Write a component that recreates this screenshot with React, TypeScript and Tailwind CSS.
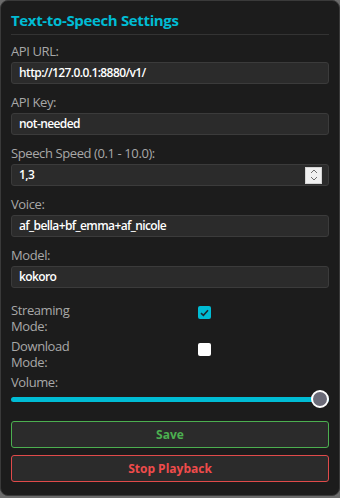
import React from 'react';

const Label = ({ children }: { children: React.ReactNode }) => (
  <div className="text-[13px] leading-[16px] tracking-[-0.4px] text-[#a8a8a8] mb-[3px]">{children}</div>
);

const Field = ({ value }: { value: string }) => (
  <div className="h-[22px] w-full rounded-[3px] border border-[#3b3b3b] bg-[#2b2b2b] px-[7px] flex items-center text-[12px] font-semibold tracking-[-0.6px] text-white">
    {value}
  </div>
);

export default function App() {
  return (
    <div className="h-[498px] w-[340px] bg-[#6b6b6b] font-['Open_Sans',sans-serif]">
      <div className="h-[496px] w-[340px] rounded-[8px] border border-[#3a3a3a] bg-[#1c1c1c] px-[10px] pt-[9px]">
        <h1 className="text-[15px] leading-[20px] font-bold text-[#00bcd4] tracking-[-0.35px]">Text-to-Speech Settings</h1>
        <div className="mt-[4px] h-px bg-[#333333]" />

        <div className="mt-[8px]">
          <Label>API URL:</Label>
          <Field value="http://127.0.0.1:8880/v1/" />
        </div>

        <div className="mt-[10px]">
          <Label>API Key:</Label>
          <Field value="not-needed" />
        </div>

        <div className="mt-[10px]">
          <Label>Speech Speed (0.1 - 10.0):</Label>
          <div className="h-[22px] w-full rounded-[3px] border border-[#3b3b3b] bg-[#2b2b2b] pl-[7px] pr-[6px] flex items-center justify-between text-[12px] font-semibold tracking-[-0.6px] text-white">
            <span>1,3</span>
            <div className="h-[17px] w-[17px] bg-[#f0f0f0] border border-[#d4d4d4] flex flex-col items-center justify-center gap-[2px]">
              <svg width="8" height="5" viewBox="0 0 8 5"><path d="M1 4 L4 1 L7 4" fill="none" stroke="#6e6e6e" strokeWidth="1" /></svg>
              <svg width="8" height="5" viewBox="0 0 8 5"><path d="M1 1 L4 4 L7 1" fill="none" stroke="#6e6e6e" strokeWidth="1" /></svg>
            </div>
          </div>
        </div>

        <div className="mt-[10px]">
          <Label>Voice:</Label>
          <Field value="af_bella+bf_emma+af_nicole" />
        </div>

        <div className="mt-[10px]">
          <Label>Model:</Label>
          <Field value="kokoro" />
        </div>

        <div className="mt-[14px] flex items-start">
          <div className="w-[70px] text-[13px] leading-[16px] tracking-[-0.4px] text-[#a8a8a8]">Streaming Mode:</div>
          <div className="ml-[117px] mt-[4px] h-[13px] w-[13px] rounded-[2px] bg-[#00bcd4] flex items-center justify-center">
            <svg width="9" height="8" viewBox="0 0 9 8"><path d="M1 4.2 L3.4 6.4 L8 1.2" fill="none" stroke="#1c2a30" strokeWidth="1.6" /></svg>
          </div>
        </div>

        <div className="mt-[4px] flex items-start">
          <div className="w-[70px] text-[13px] leading-[16px] tracking-[-0.4px] text-[#a8a8a8]">Download Mode:</div>
          <div className="ml-[117px] mt-[5px] h-[13px] w-[13px] rounded-[2px] bg-white" />
        </div>

        <div className="mt-[4px]">
          <div className="text-[13px] leading-[16px] tracking-[-0.4px] text-[#a8a8a8]">Volume:</div>
          <div className="relative h-[18px] flex items-center">
            <div className="h-[5px] w-full rounded-full bg-[#00bcd4]" />
            <div className="absolute right-[0px] top-0 h-[18px] w-[18px] rounded-full border-2 border-white bg-[#6b6b78]" />
          </div>
        </div>

        <button className="mt-[13px] h-[27px] w-full rounded-[3px] border border-[#4caf50] bg-[#2b2b2b] text-[12px] font-bold text-[#4caf50]">
          Save
        </button>
        <button className="mt-[7px] h-[27px] w-full rounded-[3px] border border-[#e04a4a] bg-[#2b2b2b] text-[12px] font-bold text-[#ef4b4b]">
          Stop Playback
        </button>
      </div>
    </div>
  );
}
